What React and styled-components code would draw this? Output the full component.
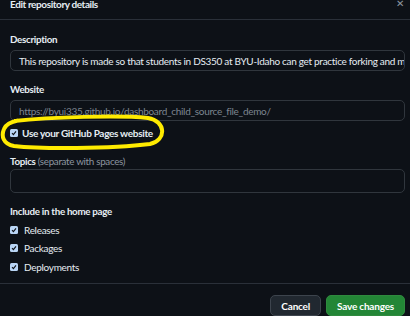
import styled, { createGlobalStyle } from "styled-components";

const Global = createGlobalStyle`
  body {
    margin: 0;
    background: #0d1117;
    font-family: "Lato", "Noto Sans", sans-serif;
    color: #e6edf3;
    letter-spacing: -0.3px;
  }
`;

const Dialog = styled.div`
  position: relative;
  width: 410px;
  height: 316px;
  overflow: hidden;
  background: #0d1117;
`;

const Header = styled.div`
  height: 20px;
  box-sizing: border-box;
  display: flex;
  justify-content: space-between;
  align-items: flex-end;
  padding: 0 6px 9px 10px;
  border-bottom: 1px solid #2a3039;
  font-size: 10px;
  font-weight: 700;
  line-height: 12px;
  letter-spacing: -0.4px;
`;

const Close = styled.span`
  color: #8d96a0;
  font-size: 10px;
  font-weight: 400;
  margin-bottom: 1px;
`;

const Body = styled.div`
  display: flex;
  flex-direction: column;
  padding: 12px 5px 0 10px;
`;

const Label = styled.div`
  font-size: 9.8px;
  font-weight: 700;
  line-height: 14px;
  margin-top: ${(p) => p.$top || 0}px;

  span {
    font-weight: 400;
    color: #8d96a0;
  }
`;

const Field = styled.div`
  height: ${(p) => p.$h || 21}px;
  box-sizing: border-box;
  margin-top: ${(p) => p.$top || 4}px;
  border: 1px solid #30363d;
  border-radius: 5px;
  background: #0d1117;
  padding: 0 8px;
  display: flex;
  align-items: center;
  font-size: 10px;
  white-space: nowrap;
  overflow: hidden;
  color: ${(p) => (p.$muted ? "#7d8590" : "#e6edf3")};
`;

const CheckRow = styled.label`
  display: flex;
  align-items: center;
  gap: ${(p) => p.$gap || 5}px;
  height: ${(p) => p.$h || 18.5}px;
  margin-top: ${(p) => p.$top || 0}px;
  font-size: 10px;
  font-weight: ${(p) => (p.$bold ? 700 : 400)};
`;

const Box = styled.span`
  width: 8px;
  height: 8px;
  border-radius: 1.5px;
  background: #b9d5f5;
  display: flex;
  align-items: center;
  justify-content: center;
  flex-shrink: 0;
`;

const Footer = styled.div`
  margin: 7px -5px 0 -10px;
  border-top: 1px solid #2a3039;
  display: flex;
  justify-content: flex-end;
  gap: 5px;
  padding: 11px 5px 0 0;
`;

const Button = styled.button`
  height: 21px;
  padding: 0 10px;
  border-radius: 5px;
  font-family: inherit;
  font-size: 10px;
  font-weight: 700;
  letter-spacing: -0.2px;
  color: #fff;
  border: 1px solid ${(p) => (p.$primary ? "#2f8a3e" : "#3d444d")};
  background: ${(p) => (p.$primary ? "#238636" : "#212830")};
`;

const Ring = styled.svg`
  position: absolute;
  left: 0;
  top: 110px;
  pointer-events: none;
`;

function Check() {
  return (
    <Box>
      <svg width="6" height="6" viewBox="0 0 6 6">
        <path d="M1 3.2 L2.4 4.6 L5 1.4" fill="none" stroke="#0d1117" strokeWidth="1.1" />
      </svg>
    </Box>
  );
}

export default function App() {
  return (
    <Dialog>
      <Global />
      <Header>
        <span>Edit repository details</span>
        <Close>✕</Close>
      </Header>
      <Body>
        <Label>Description</Label>
        <Field>
          This repository is made so that students in DS350 at BYU-Idaho can get practice forking and making changes
        </Field>
        <Label $top={11}>Website</Label>
        <Field $muted>https://byui335.github.io/dashboard_child_source_file_demo/</Field>
        <CheckRow $bold $gap={4} $h={24}>
          <Check />
          Use your GitHub Pages website
        </CheckRow>
        <Label $top={9}>
          Topics <span>(separate with spaces)</span>
        </Label>
        <Field $top={1} $h={24} />
        <Label $top={10.5}>Include in the home page</Label>
        <CheckRow $gap={6} $top={3}>
          <Check />
          Releases
        </CheckRow>
        <CheckRow $gap={6}>
          <Check />
          Packages
        </CheckRow>
        <CheckRow $gap={6}>
          <Check />
          Deployments
        </CheckRow>
        <Footer>
          <Button>Cancel</Button>
          <Button $primary>Save changes</Button>
        </Footer>
      </Body>
      <Ring width="172" height="42" viewBox="0 0 172 42">
        <path
          d="M14 11 C50 7 120 5 148 8 C166 11 167 30 150 34 C110 39 40 39 14 36 C3 34 1 26 4 19 C6 14 10 12 18 10.5"
          fill="none"
          stroke="#ffeb00"
          strokeWidth="4"
        />
      </Ring>
    </Dialog>
  );
}
